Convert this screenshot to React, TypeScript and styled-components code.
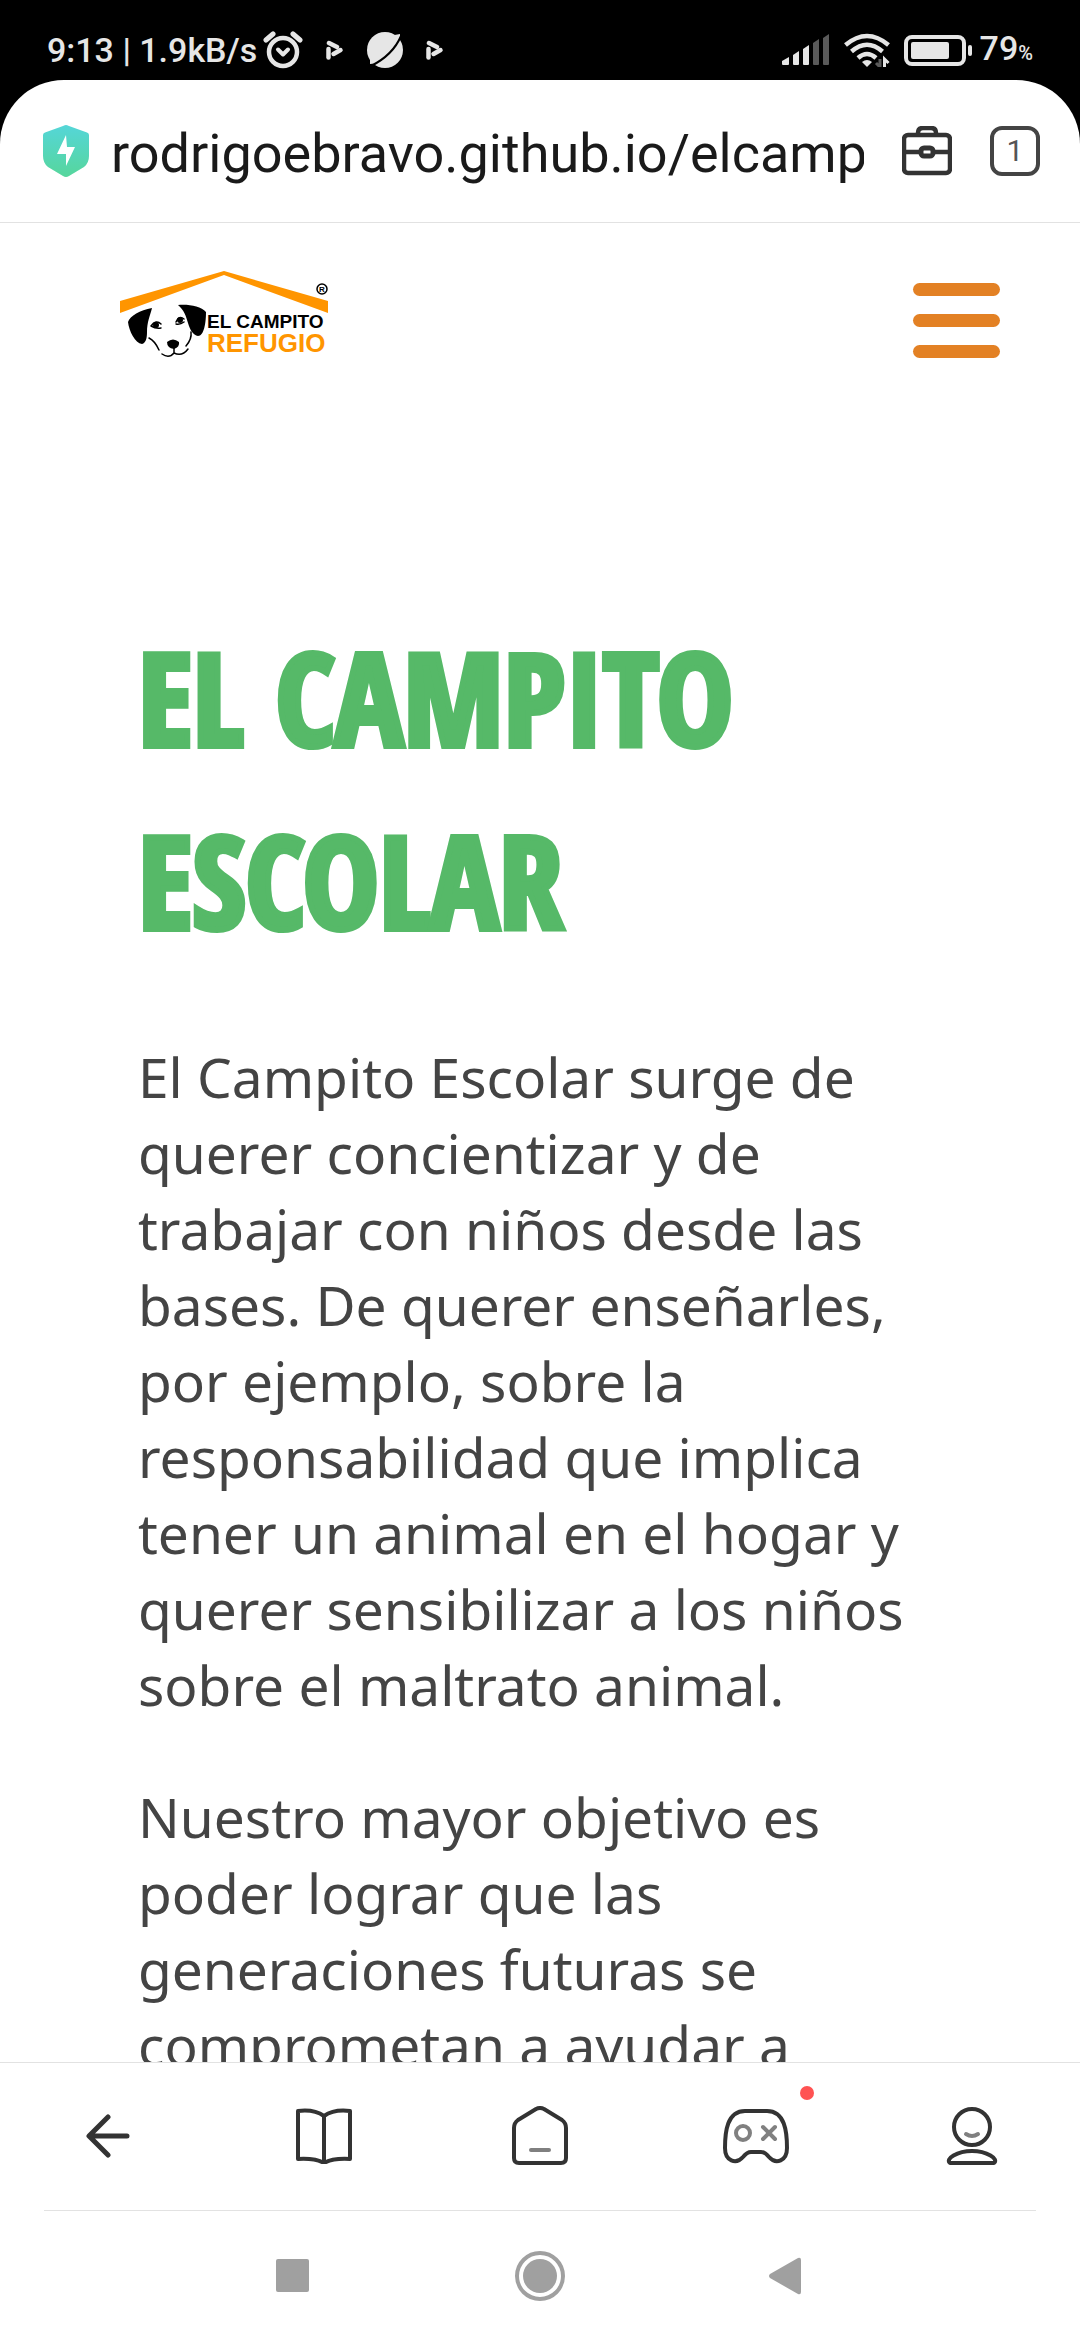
import React from "react";
import styled, { createGlobalStyle } from "styled-components";

const GlobalStyle = createGlobalStyle`
  * { box-sizing: border-box; }
  html, body { margin: 0; padding: 0; background: #fff; }
  button { border: 0; padding: 0; margin: 0; background: none; font: inherit; color: inherit; }
  svg { display: block; flex: none; }
`;

const Screen = styled.div`
  display: flex;
  flex-direction: column;
  height: 100vh;
  overflow: hidden;
  background: #000;
  font-family: Roboto, sans-serif;
`;

const StatusBar = styled.header`
  display: flex;
  align-items: center;
  justify-content: space-between;
  height: 80px;
  padding: 20px 47px 0;
  color: #e6e6e6;
  font-size: 34px;
  font-weight: 500;
  line-height: 40px;
`;

const StatusGroup = styled.div<{ $gap: number }>`
  display: flex;
  align-items: center;
  gap: ${(p) => p.$gap}px;
`;

const Percent = styled.small`
  font-size: 20px;
`;

const Sheet = styled.div`
  display: flex;
  flex: 1;
  flex-direction: column;
  min-height: 0;
  overflow: hidden;
  border-radius: 64px 64px 0 0;
  background: #fff;
`;

const AddressBar = styled.div`
  display: flex;
  align-items: center;
  height: 143px;
  padding: 0 40px 0 42px;
  border-bottom: 1px solid #e2e2e2;
  color: #1a1a1a;
`;

const Address = styled.input`
  flex: 1;
  min-width: 0;
  margin: 0 38px 0 21px;
  padding: 6px 0 0;
  border: 0;
  outline: 0;
  background: none;
  color: #1a1a1a;
  font: 400 54px/72px Roboto, sans-serif;
`;

const BarButtons = styled.div`
  display: flex;
  gap: 38px;
`;

const TabCount = styled.button`
  width: 50px;
  height: 50px;
  border: 4px solid #444;
  border-radius: 12px;
  color: #555;
  font-size: 30px;
  line-height: 40px;
`;

const Page = styled.main`
  flex: 1;
  min-height: 0;
  overflow: hidden;
`;

const SiteHeader = styled.div`
  display: flex;
  align-items: center;
  justify-content: space-between;
  padding: 48px 80px 0 120px;
`;

const MenuButton = styled.button`
  display: flex;
  flex-direction: column;
  gap: 18px;
  width: 87px;
`;

const MenuBar = styled.span`
  height: 13px;
  border-radius: 7px;
  background: #e38124;
`;

const Article = styled.article`
  padding: 236px 138px 0;
`;

const Title = styled.h1`
  margin: 0;
  color: #56b968;
  font-family: "Open Sans Condensed", "Liberation Sans Narrow", "Open Sans", sans-serif;
  font-size: 128px;
  font-weight: 700;
  line-height: 183px;
  text-transform: uppercase;
  -webkit-text-stroke: 6px #56b968;
`;

const Paragraph = styled.p`
  margin: 0 0 56px;
  color: #444;
  font-family: "Noto Sans", sans-serif;
  font-size: 55px;
  line-height: 76px;

  ${Title} + & { margin-top: 68px; }
`;

const Toolbar = styled.nav`
  display: grid;
  grid-template-columns: repeat(5, 1fr);
  height: 148px;
  padding-bottom: 2px;
  border-top: 1px solid #e2e2e2;
  background: #fff;
`;

const ToolButton = styled.button`
  display: grid;
  place-items: center;
`;

const IconSlot = styled.span`
  position: relative;
  display: block;
`;

const Badge = styled.span`
  position: absolute;
  top: -22px;
  right: -25px;
  width: 14px;
  height: 14px;
  border-radius: 50%;
  background: #ff5252;
`;

const SystemBar = styled.div`
  display: grid;
  grid-template-columns: repeat(3, 1fr);
  height: 130px;
  margin: 0 44px;
  padding: 0 124px;
  border-top: 1px solid #e2e2e2;
`;

const Alarm = () => (
  <svg width="40" height="38" viewBox="0 0 40 38" fill="none" stroke="#e6e6e6">
    <circle cx="20" cy="21" r="14" strokeWidth="4.500" />
    <path d="M15 18.500l5 5 5-5" strokeWidth="4" strokeLinecap="round" strokeLinejoin="round" />
    <path d="M3 9l7-6M37 9l-7-6" strokeWidth="5" strokeLinecap="round" />
  </svg>
);

const Play = () => (
  <svg width="18" height="20" viewBox="0 0 18 20" fill="none" stroke="#e6e6e6" strokeWidth="4.500" strokeLinecap="round">
    <path d="M3 3l8 4" />
    <path d="M2.500 9v8.500" />
    <path d="M7.500 14l7-4" />
  </svg>
);

const Sphere = () => (
  <svg width="36" height="36" viewBox="0 0 36 36">
    <circle cx="18" cy="18" r="18" fill="#e6e6e6" />
    <path d="M22 4L33 2 33 12zM3 22L3 32 13 31z" fill="#e6e6e6" />
    <path d="M4 34C16 28 28 18 34 4" fill="none" stroke="#000" strokeWidth="2" />
  </svg>
);

const Signal = () => (
  <svg width="48" height="32" viewBox="0 0 48 32" fill="#e6e6e6">
    <path d="M0 27l7-4v7q0 1-1 1H1q-1 0-1-1z" />
    <path d="M11 21l6-4v13q0 1-1 1h-4q-1 0-1-1z" />
    <path d="M21 15l6-4v19q0 1-1 1h-4q-1 0-1-1z" />
    <path d="M31 9l6-4v25q0 1-1 1h-4q-1 0-1-1z" fill="#5a5a5a" />
    <path d="M41 4l6-4v30q0 1-1 1h-4q-1 0-1-1z" fill="#5a5a5a" />
  </svg>
);

const Wifi = () => (
  <svg width="46" height="34" viewBox="0 0 46 34" fill="none" stroke="#e6e6e6" strokeWidth="4.500">
    <path d="M1.500 12Q23-6 44.500 12M7.500 18.500Q23 5 38.500 18.500M14 25Q23 17 32 25" />
    <path d="M18 29q5-4 10 0l-5 5z" fill="#e6e6e6" stroke="none" />
    <path d="M36 26v8l-4-4" stroke="#5a5a5a" strokeWidth="3" />
    <path d="M40.500 34v-8l4 4" strokeWidth="3" />
  </svg>
);

const Battery = () => (
  <svg width="68" height="31" viewBox="0 0 68 31" fill="none">
    <rect x="2" y="2" width="58" height="27" rx="6" stroke="#e6e6e6" strokeWidth="4" />
    <rect x="7" y="7" width="38" height="17" rx="2" fill="#e6e6e6" />
    <rect x="64" y="10" width="4" height="11" rx="2" fill="#e6e6e6" />
  </svg>
);

const Shield = () => (
  <svg width="48" height="54" viewBox="0 0 48 54">
    <defs>
      <linearGradient id="shield" x1="0" y1="0" x2="0" y2="1">
        <stop offset="0" stopColor="#55d6d8" />
        <stop offset="1" stopColor="#56d69c" />
      </linearGradient>
    </defs>
    <path d="M24 1Q25 1 27 2L45 8.500Q47 9 47 11V32Q47 39 42 43L27 52Q24 54 21 52L6 43Q1 39 1 32V11Q1 9 3 8.500L21 2Q23 1 24 1z" fill="url(#shield)" />
    <path d="M24 11L15 30h9v12l9-19h-8z" fill="#fff" />
  </svg>
);

const Briefcase = () => (
  <svg width="50" height="50" viewBox="0 0 50 50" fill="none" stroke="#333" strokeWidth="4.500">
    <path d="M16 9V7q0-5 5-5h8q5 0 5 5v2" />
    <rect x="2" y="9" width="46" height="38" rx="4" />
    <path d="M3 26h16M31 26h16" />
    <rect x="19" y="22" width="12" height="8" rx="3" strokeWidth="5" />
  </svg>
);

const Logo = () => (
  <svg width="210" height="98" viewBox="0 0 210 98" role="img" aria-label="El Campito Refugio">
    <path d="M0 30L104 0 208 30V42L104 4 0 42z" fill="#ff9500" />
    <circle cx="202" cy="18" r="5" fill="none" stroke="#000" strokeWidth="1.500" />
    <text x="202" y="21" fontFamily="Liberation Sans" fontWeight="700" fontSize="8" textAnchor="middle">R</text>
    <path d="M32 37C20 39 10 45 8 51C9 60 15 72 22 73C26 72 27 67 27 61C27 51 30 45 32 37z" />
    <path d="M58 34C68 33 81 35 86 41C86 52 84 65 78 65C73 64 70 59 68 52C66 45 64 39 58 34z" />
    <g fill="none" stroke="#000" strokeWidth="1.500" strokeLinecap="round">
      <path d="M31 55Q36 48 41 53M31 55q5 3 10 2M56 51Q59 44 64 48M56 53q4 1 8-2" />
      <path d="M29 67Q35 70 39 79M71 61Q72 68 66 75" />
      <path d="M42 83Q49 88 54 82V77M54 82Q62 86 68 78" />
    </g>
    <circle cx="36" cy="54" r="3" />
    <circle cx="60" cy="49" r="3" />
    <path d="M47 71Q53 66 59 71Q60 76 54 78Q47 77 47 71z" />
    <g fontFamily="Liberation Sans, sans-serif" fontWeight="700">
      <text x="87" y="57" fontSize="19">EL CAMPITO</text>
      <text x="87" y="81" fontSize="26" fill="#ff9500">REFUGIO</text>
    </g>
  </svg>
);

const line = { fill: "none", stroke: "#333", strokeWidth: 4, strokeLinecap: "round", strokeLinejoin: "round" } as const;

const Back = () => (
  <svg width="44" height="44" viewBox="0 0 44 44" {...line} strokeWidth={5}>
    <path d="M41 22H4M22 3L3 22l19 19" />
  </svg>
);

const Book = () => (
  <svg width="56" height="56" viewBox="0 0 56 56" {...line}>
    <path d="M28 8Q18 1 2 3v48q17-1 26 4q9-5 26-4V3Q38 1 28 8zV54" />
  </svg>
);

const Home = () => (
  <svg width="58" height="60" viewBox="0 0 58 60" {...line}>
    <path d="M25 3q4-2 8 0L51 14q4 3 4 8V52q0 5-5 5H8q-5 0-5-5V22q0-5 4-8z" />
    <path d="M20 44h18" stroke="#808080" />
  </svg>
);

const Gamepad = () => (
  <svg width="66" height="56" viewBox="0 0 66 56" {...line}>
    <path d="M22 3h22C62 3 64 24 64 40C64 53 53 57 46 49Q42 44 38 44H28Q24 44 20 49C13 57 2 53 2 40C2 24 4 3 22 3z" />
    <g stroke="#808080">
      <circle cx="20" cy="25" r="7" />
      <path d="M40 19l12 12M52 19L40 31" />
    </g>
  </svg>
);

const Person = () => (
  <svg width="52" height="60" viewBox="0 0 52 60" {...line}>
    <circle cx="26" cy="21" r="18" />
    <path d="M20 28q6 4 12 0" stroke="#808080" />
    <path d="M4 57C-1 53 11 45 26 45S53 53 48 57z" />
  </svg>
);

const Square = () => (
  <svg width="33" height="33" viewBox="0 0 33 33"><rect width="33" height="33" rx="2" fill="#a0a0a0" /></svg>
);

const Circle = () => (
  <svg width="52" height="52" viewBox="0 0 52 52">
    <circle cx="26" cy="26" r="23" fill="none" stroke="#a0a0a0" strokeWidth="4" />
    <circle cx="26" cy="26" r="17" fill="#a0a0a0" />
  </svg>
);

const Triangle = () => (
  <svg width="38" height="38" viewBox="0 0 38 38" fill="#a0a0a0">
    <path d="M1 17L29 1q3-1 3 2v32q0 3-3 2L1 21q-2-2 0-4z" />
  </svg>
);

const tools = [
  { label: "Atrás", icon: <Back /> },
  { label: "Lectura", icon: <Book /> },
  { label: "Inicio", icon: <Home /> },
  { label: "Juegos", icon: <Gamepad />, badge: true },
  { label: "Perfil", icon: <Person /> },
];

const systemKeys = [
  { label: "Recientes", icon: <Square /> },
  { label: "Pantalla de inicio", icon: <Circle /> },
  { label: "Volver", icon: <Triangle /> },
];

export default function App() {
  return (
    <Screen>
      <GlobalStyle />
      <StatusBar>
        <StatusGroup $gap={6}>
          <span>9:13 | 1.9kB/s</span>
          <StatusGroup $gap={23}>
            <Alarm />
            <Play />
            <Sphere />
            <Play />
          </StatusGroup>
        </StatusGroup>
        <StatusGroup $gap={14}>
          <Signal />
          <Wifi />
          <StatusGroup $gap={8}>
            <Battery />
            <span>79<Percent>%</Percent></span>
          </StatusGroup>
        </StatusGroup>
      </StatusBar>
      <Sheet>
        <AddressBar>
          <Shield />
          <Address aria-label="Dirección" defaultValue="rodrigoebravo.github.io/elcamp" />
          <BarButtons>
            <button aria-label="Herramientas"><Briefcase /></button>
            <TabCount aria-label="Pestañas">1</TabCount>
          </BarButtons>
        </AddressBar>
        <Page>
          <SiteHeader>
            <a href="#inicio"><Logo /></a>
            <MenuButton aria-label="Menú">
              <MenuBar />
              <MenuBar />
              <MenuBar />
            </MenuButton>
          </SiteHeader>
          <Article>
            <Title>El Campito Escolar</Title>
            <Paragraph>
              El Campito Escolar surge de querer concientizar y de trabajar con niños desde las
              bases. De querer enseñarles, por ejemplo, sobre la responsabilidad que implica tener
              un animal en el hogar y querer sensibilizar a los niños sobre el maltrato animal.
            </Paragraph>
            <Paragraph>
              Nuestro mayor objetivo es poder lograr que las generaciones futuras se comprometan a
              ayudar a
            </Paragraph>
          </Article>
        </Page>
        <Toolbar aria-label="Navegador">
          {tools.map((t) => (
            <ToolButton key={t.label} aria-label={t.label}>
              <IconSlot>
                {t.icon}
                {t.badge && <Badge />}
              </IconSlot>
            </ToolButton>
          ))}
        </Toolbar>
        <SystemBar>
          {systemKeys.map((k) => (
            <ToolButton key={k.label} aria-label={k.label}>{k.icon}</ToolButton>
          ))}
        </SystemBar>
      </Sheet>
    </Screen>
  );
}
